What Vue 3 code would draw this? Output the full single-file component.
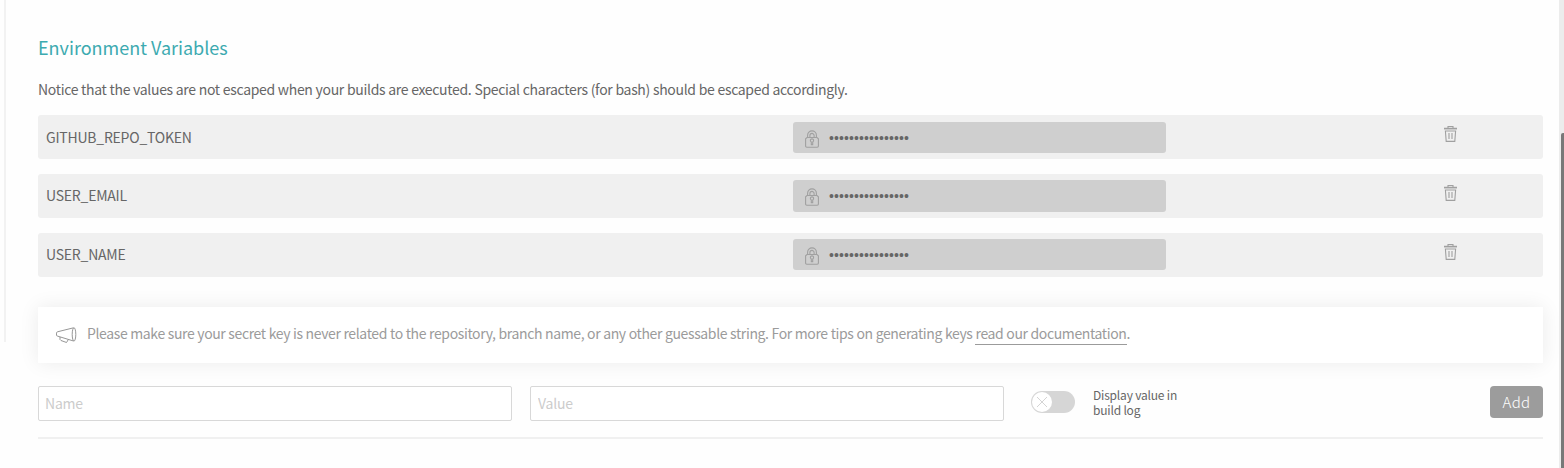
<script setup>
import { ref } from 'vue'

const variables = ref([
  { name: 'GITHUB_REPO_TOKEN' },
  { name: 'USER_EMAIL' },
  { name: 'USER_NAME' },
])
const mask = '•'.repeat(16)
</script>

<template>
  <div class="page">
    <div class="side-rule"></div>
    <main class="settings">
      <h2 class="title">Environment Variables</h2>
      <p class="notice">Notice that the values are not escaped when your builds are executed. Special characters (for bash) should be escaped accordingly.</p>

      <ul class="vars">
        <li v-for="v in variables" :key="v.name" class="var">
          <span class="var-name">{{ v.name }}</span>
          <span class="secret">
            <svg class="lock" width="14" height="18" viewBox="0 0 14 18" fill="none" stroke="#a0a0a0" stroke-width="1.1">
              <path d="M2 7.500h10l1.400 1.300v7.200q0 1.200-1.200 1.200H1.800q-1.200 0-1.200-1.200V8.800z" />
              <path d="M2.600 7.500V5.300a4.400 4.400 0 0 1 8.800 0V7.500M4.900 7.500V5.500a2.100 2.100 0 0 1 4.200 0V7.500z" />
              <path d="M6.300 11.900a1.600 1.600 0 1 1 1.400 0v2.700H6.300z" />
            </svg>
            <span class="mask">{{ mask }}</span>
          </span>
          <svg class="trash" width="14" height="18" viewBox="0 0 14 18" fill="none" stroke="#a0a0a0" stroke-width="1.1">
            <path d="M4 3V1.500h5V3M0 3.400h13" />
            <path d="M0 4.300h13" opacity=".5" />
            <path d="M1.400 6l.8 10.400h8.600L11.600 6z" />
            <path d="M5 8v6M8 8v6" />
          </svg>
        </li>
      </ul>

      <div class="tip">
        <svg class="horn" width="21" height="17" viewBox="0 0 21 17" fill="none" stroke="#8a8a8a" stroke-width=".9">
          <path d="M17.500 .8L1.500 4.800q-1 .3-1 1.300v2q0 .8 1 1l16 4.900" />
          <ellipse cx="18" cy="7.400" rx="1.800" ry="6.700" />
          <path d="M4 10v2.500l1 1 5.500 2 1.700-2.700" />
        </svg>
        <span class="tip-text">Please make sure your secret key is never related to the repository, branch name, or any other guessable string. For more tips on generating keys <a class="link">read our documentation</a>.</span>
      </div>

      <form class="form" @submit.prevent>
        <input class="field name" type="text" placeholder="Name" />
        <input class="field" type="text" placeholder="Value" />
        <span class="toggle">
          <span class="knob">
            <svg width="10" height="10" viewBox="0 0 10 10" stroke="#d4d4d4" stroke-width="1"><path d="M0 0L10 10M10 0L0 10" /></svg>
          </span>
        </span>
        <span class="toggle-label">Display value in<br />build log</span>
        <button class="add" type="button">Add</button>
      </form>
    </main>
    <div class="scroll"><div class="thumb"></div></div>
  </div>
</template>

<style>
body {
  background: #fefefe;
  overflow: hidden;
}
</style>

<style scoped>
.page {
  display: flex;
  height: 468px;
  overflow: hidden;
  font-family: "Noto Sans CJK SC", "Open Sans", sans-serif;
  font-size: 14px;
  color: #666;
}
.side-rule {
  flex: none;
  width: 2px;
  height: 342px;
  margin-left: 4px;
  background: #f2f2f2;
}
.settings {
  flex: none;
  width: 1505px;
  margin-left: 32px;
}
.title {
  margin: 35px 0 0;
  font-size: 18px;
  line-height: 24px;
  font-weight: 400;
  color: #3caab0;
  white-space: nowrap;
}
.notice {
  margin: 20px 0 0;
  line-height: 20px;
  letter-spacing: -0.325px;
  word-spacing: 0.2px;
  white-space: nowrap;
}
.vars {
  display: flex;
  flex-direction: column;
  gap: 15px;
  margin: 16px 0 0;
  padding: 0;
  list-style: none;
}
.var {
  display: grid;
  grid-template-columns: 755px 651px 1fr;
  height: 44px;
  border-radius: 3px;
  background: #f0f0f0;
}
.var-name {
  padding-left: 8px;
  line-height: 44px;
  letter-spacing: -0.22px;
}
.var:nth-child(n + 2) .var-name {
  line-height: 42px;
}
.secret {
  display: flex;
  align-items: center;
  box-sizing: border-box;
  width: 373px;
  height: 31px;
  margin-top: 7px;
  padding-left: 12px;
  border-radius: 3px;
  background: #cfcfcf;
}
.var:nth-child(2) .secret {
  height: 32px;
  margin-top: 6px;
}
.var:nth-child(3) .secret {
  margin-top: 6px;
}
.lock {
  margin-top: 2px;
}
.mask {
  margin-left: 10px;
  font-family: "Liberation Sans", sans-serif;
  font-size: 14px;
  line-height: 20px;
  letter-spacing: 0.1px;
}
.trash {
  margin-top: 10px;
}
.tip {
  display: flex;
  align-items: center;
  height: 56px;
  margin-top: 30px;
  padding-left: 18px;
  background: #fff;
  box-shadow: 0 0 20px rgba(0, 0, 0, 0.08);
  color: #9b9b9b;
}
.tip-text {
  margin: -3px 0 0 10px;
  line-height: 20px;
  letter-spacing: -0.37px;
  word-spacing: 0.15px;
  white-space: nowrap;
}
.link {
  padding-bottom: 1px;
  border-bottom: 1px solid #9b9b9b;
  display: inline-block;
  margin-bottom: -1px;
}
.form {
  display: flex;
  align-items: flex-start;
  height: 51px;
  margin-top: 23px;
  border-bottom: 2px solid #f0f0f0;
}
.field {
  box-sizing: border-box;
  width: 474px;
  height: 35px;
  margin: 0 18px 0 0;
  padding: 0 7px 2px;
  border: 1px solid #d8d8d8;
  border-radius: 2px;
  background: #fff;
  font: inherit;
}
.field.name {
  padding-left: 6px;
}
.field::placeholder {
  color: #ccc;
  letter-spacing: -0.2px;
  opacity: 1;
}
.toggle {
  display: flex;
  align-items: center;
  box-sizing: border-box;
  width: 44px;
  height: 22px;
  margin: 5px 0 0 9px;
  padding-left: 1px;
  border-radius: 11px;
  background: #d6d6d6;
}
.knob {
  display: flex;
  align-items: center;
  justify-content: center;
  width: 20px;
  height: 20px;
  border-radius: 50%;
  background: #fff;
}
.toggle-label {
  margin: 1px 0 0 18px;
  font-size: 12px;
  line-height: 15px;
  letter-spacing: -0.19px;
  white-space: nowrap;
}
.add {
  width: 53px;
  height: 32px;
  margin-left: auto;
  padding: 0;
  border: 0;
  border-radius: 4px;
  background: #9c9c9c;
  color: #fff;
  font-family: inherit;
  font-size: 15px;
  font-weight: 300;
  line-height: 32px;
  letter-spacing: 0.3px;
}
.scroll {
  flex: none;
  width: 5px;
  height: 468px;
  margin-left: 16px;
  background: #ececec;
}
.thumb {
  height: 335px;
  margin-left: 2px;
  border-top-left-radius: 2px;
  background: #787878;
  transform: translateY(133px);
}
</style>
